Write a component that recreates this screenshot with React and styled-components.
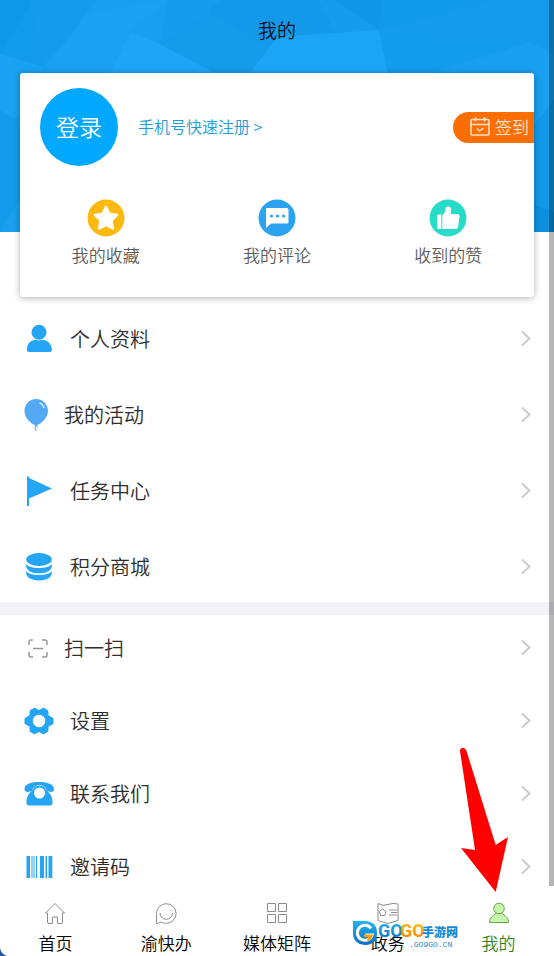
import React from 'react';

import styled, { createGlobalStyle } from 'styled-components';

const FONT_STACK = '"Noto Sans CJK SC", "Noto Sans", sans-serif';
const BLUE = '#24a5f5';
const GREEN = '#2f8420';
const TAB_GREY = '#8c8c8c';

const GlobalStyle = createGlobalStyle`
  * {
    box-sizing: border-box;
  }

  body {
    background: #ffffff;
    font-family: ${FONT_STACK};
    font-weight: 350;
    margin: 0;
  }

  button {
    background: none;
    border: 0;
    cursor: pointer;
    font: inherit;
    padding: 0;
  }

  a {
    color: inherit;
    text-decoration: none;
  }

  svg {
    display: block;
    flex: none;
  }
`;

const Page = styled.div`
  display: flex;
  flex-direction: column;
  height: 100vh;
  overflow: hidden;
  position: relative;
`;

const ScrollFrame = styled.div`
  flex: 1;
  min-height: 0;
  position: relative;
`;

const ScrollArea = styled.main`
  height: 100%;
  overflow-y: auto;
  scrollbar-width: none;
`;

const ScrollThumb = styled.div`
  background: rgba(0, 0, 0, 0.29);
  bottom: 0;
  position: absolute;
  right: 0;
  top: 0;
  width: 5px;
`;

const Hero = styled.header`
  position: relative;
`;

const HeroBackdrop = styled.svg`
  height: 232px;
  left: 0;
  position: absolute;
  top: 0;
  width: 100%;
`;

const Title = styled.h1`
  color: #0a0f1c;
  font-size: 19px;
  font-weight: 350;
  line-height: 60px;
  margin: 0;
  padding-bottom: 13px;
  position: relative;
  text-align: center;
`;

const Card = styled.section`
  background: #ffffff;
  border-radius: 3px;
  box-shadow: 0 1px 7px rgba(0, 0, 0, 0.3);
  margin: 0 20px;
  padding: 15px 0 29px;
  position: relative;
`;

const Account = styled.div`
  align-items: center;
  display: flex;
  gap: 20px;
  padding-left: 20px;
`;

const LoginButton = styled.button`
  background: #00a8ff;
  border-radius: 50%;
  color: #ffffff;
  font-size: 23px;
  height: 78px;
  padding-bottom: 3px;
  width: 78px;
`;

const RegisterLink = styled.a`
  color: #1c9cd4;
  font-size: 16px;
  padding-bottom: 2px;
`;

const CheckInButton = styled.button`
  align-items: center;
  background: #fb6e04;
  border-radius: 16px 0 0 16px;
  color: #ffe3cf;
  display: flex;
  font-size: 17px;
  gap: 5px;
  height: 31px;
  margin-left: auto;
  padding: 0 5px 2px 17px;
`;

const Stats = styled.nav`
  display: grid;
  grid-template-columns: repeat(3, 1fr);
  padding-top: 33px;
`;

const StatLink = styled.a`
  align-items: center;
  color: #5c5c5c;
  display: flex;
  flex-direction: column;
  font-size: 17px;
  gap: 5px;
  line-height: 26px;
`;

const Menu = styled.ul`
  display: flex;
  flex-direction: column;
  gap: ${({ $gap }) => $gap}px;
  list-style: none;
  margin: 0;
  padding: ${({ $top }) => $top}px 0 5px;
`;

const MenuLink = styled.a`
  align-items: center;
  color: #2d2d2d;
  display: flex;
  font-size: 20px;
  gap: 16px;
  height: 60px;
  padding: 0 22px 0 24px;
`;

const MenuLabel = styled.span`
  flex: 1;
  padding-bottom: 2px;
`;

const Divider = styled.hr`
  background: #f2f2f8;
  border: 0;
  height: 13px;
  margin: 0;
`;

const TabBar = styled.nav`
  background: #ffffff;
  display: grid;
  grid-template-columns: repeat(5, 1fr);
  height: 70px;
  padding-top: 16px;
`;

const TabLink = styled.a`
  align-items: center;
  color: ${({ $active }) => ($active ? GREEN : '#000000')};
  display: flex;
  flex-direction: column;
  font-size: 17px;
  gap: 7px;
  line-height: 24px;
`;

const Arrow = styled.svg`
  bottom: 63px;
  pointer-events: none;
  position: absolute;
  right: 44px;
`;

const Watermark = styled.svg`
  bottom: 6px;
  pointer-events: none;
  position: absolute;
  right: 92px;
`;

const Corner = styled.svg`
  bottom: 0;
  left: 0;
  position: absolute;
`;

const Backdrop = () => (
  <HeroBackdrop viewBox="0 0 554 232" preserveAspectRatio="none" aria-hidden="true">
    <rect width="554" height="232" fill="#189ff0" />
    <path d="M0 0H34L0 54Z" fill="#0f97e8" />
    <path d="M34 0H96L44 67L0 54Z" fill="#129aeb" />
    <path d="M30 0L44 67L86 14L96 0Z" fill="#149bec" />
    <path d="M0 54L44 67L20 115L0 130Z" fill="#1aa1f2" />
    <path d="M86 14L168 0L130 32L110 72H44Z" fill="#1aa1f2" />
    <path d="M130 32L160 44L215 73H110Z" fill="#1ea5f5" />
    <path d="M168 0H220L208 13L160 44Z" fill="#159ced" />
    <path d="M208 13L160 44L215 73H250L277 50Z" fill="#149bea" />
    <path d="M220 0H330L379 30L318 36L277 50L208 13Z" fill="#1299ea" />
    <path d="M318 0L340 0L379 30L336 34Z" fill="#169ced" />
    <path d="M277 37L379 30L388 73H250Z" fill="#1da5f5" />
    <path d="M335 0H383L379 30Z" fill="#0f96e7" />
    <path d="M383 0H495L379 30Z" fill="#129aea" />
    <path d="M495 0H554V56L530 42L379 30Z" fill="#149bec" />
    <path d="M379 30L530 42L430 73H388Z" fill="#139bec" />
    <path d="M530 42L554 56V120L534 76H430Z" fill="#199ff0" />
    <path d="M0 110L20 122V232H0Z" fill="#149bec" />
    <path d="M0 232L20 200V232Z" fill="#1aa0ef" />
    <path d="M534 125L554 100V232H534Z" fill="#1198e8" />
    <path d="M534 205L554 212V232H534Z" fill="#0c90e0" />
  </HeroBackdrop>
);

const CalendarIcon = () => (
  <svg width="20" height="20" viewBox="0 0 20 20" fill="none" stroke="#ffe3cf" strokeWidth="1.5">
    <rect x="1" y="3.5" width="18" height="15.5" rx="1" />
    <path d="M1 8.5H19M5.5 1V5.5M14.5 1V5.500M7 12.5L9.5 15L13.5 12" />
  </svg>
);

const StarIcon = () => (
  <svg width="38" height="38" viewBox="0 0 38 38">
    <circle cx="19" cy="19" r="18.5" fill="#fdb90e" />
    <path
      d="M19 8L22.3 14.8L30 16L24.5 21.4L25.8 29.4L19 25.8L12.2 29.4L13.5 21.4L8 16L15.7 14.8Z"
      fill="#ffffff"
      stroke="#ffffff"
      strokeLinejoin="round"
      strokeWidth="2.5"
    />
  </svg>
);

const CommentIcon = () => (
  <svg width="38" height="38" viewBox="0 0 38 38">
    <circle cx="19" cy="19" r="18.5" fill="#2ba3ef" />
    <path d="M9 9H29Q30.5 9 30.5 10.5V23Q30.5 24.5 29 24.5H13L8 29V10Q8 9 9 9Z" fill="#ffffff" />
    <g fill="#2ba3ef">
      <circle cx="13.5" cy="17" r="1.6" />
      <circle cx="19.5" cy="17" r="1.6" />
      <circle cx="25.5" cy="17" r="1.6" />
    </g>
  </svg>
);

const LikeIcon = () => (
  <svg width="38" height="38" viewBox="0 0 38 38">
    <circle cx="19" cy="19" r="18.5" fill="#26dcc6" />
    <g fill="#ffffff">
      <path d="M8 17.5Q8 15.5 10 15.5H12.3V30H10Q8 30 8 28Z" />
      <path d="M13.3 16Q16.5 14 16.5 10Q16.5 7.5 19 7.5Q22.5 7.5 22.3 11.5L21.5 15H28.5Q30.8 15 30.6 17.5L29 28Q28.7 30 27 30H13.3Z" />
    </g>
  </svg>
);

const PersonIcon = () => (
  <svg width="30" height="30" viewBox="0 0 30 30" fill={BLUE}>
    <circle cx="15" cy="8.3" r="7.5" />
    <path d="M2.8 26C3 19.5 7 15.8 12 15.8Q15 17 18 15.8C23 15.8 27.5 19.5 28 26Q28 28 26 28H5Q2.8 28 2.8 26Z" />
  </svg>
);

const BalloonIcon = () => (
  <svg width="24" height="34" viewBox="0 0 24 34">
    <path d="M12.3 1C19 1 24 6.5 24 13C24 19.5 17.5 26 13 27L14 28.5H10L11.3 27C6.5 26 .5 19.5 .5 13C.5 6.5 5.5 1 12.3 1Z" fill="#54a9f6" />
    <path d="M12 28Q9.5 30.5 12.5 33" fill="none" stroke="#54a9f6" />
    <path d="M15.5 5Q19 6 20 10" fill="none" stroke="#d6ecff" strokeWidth="1.5" />
  </svg>
);

const FlagIcon = () => (
  <svg width="30" height="32" viewBox="0 0 30 32" fill={BLUE}>
    <path d="M3 1.5H5V31H3Z" />
    <path d="M5 3L28 13.5L5 23.5Z" />
  </svg>
);

const CoinsIcon = () => (
  <svg width="30" height="30" viewBox="0 0 30 30" fill={BLUE}>
    <ellipse cx="15" cy="7.5" rx="12.8" ry="6.5" />
    <path d="M2.2 12C5 17.3 25 17.3 27.8 12C29 18 23 21.3 15 21.3S1 18 2.2 12Z" />
    <path d="M2.2 19C5 24.3 25 24.3 27.8 19C29 25 23 28.5 15 28.5S1 25 2.2 19Z" />
  </svg>
);

const ScanIcon = () => (
  <svg width="24" height="24" viewBox="0 0 24 24" fill="none" stroke="#999999" strokeWidth="1.5">
    <path d="M5 9V6Q5 4 7 4H9M18 4H21Q23 4 23 6V9M23 16V19Q23 21 21 21H18M9 21H7Q5 21 5 19V16M9 12.5H19.5" />
  </svg>
);

const GearIcon = () => (
  <svg width="30" height="30" viewBox="0 0 30 30">
    <path
      d="M28 13V17L23.2 19.8L22.8 24.8L19.5 26.8L15 24.3L10.5 26.8L7.2 24.8L6.8 19.8L2 17V13L6.8 10.2L7.2 5.2L10.5 3.2L15 5.7L19.5 3.2L22.8 5.2L23.2 10.2Z"
      fill={BLUE}
      stroke={BLUE}
      strokeLinejoin="round"
      strokeWidth="3"
    />
    <circle cx="15" cy="15" r="6.2" fill="#ffffff" />
  </svg>
);

const PhoneIcon = () => (
  <svg width="30" height="30" viewBox="0 0 30 30">
    <path d="M.5 10C1 4.5 8 3 15 3S29.5 4.5 30 10Q30 13 27 13L23 12C22 8 19 6.3 15.5 6.3S9 8 8 12L4 13Q.5 13 .5 10Z" fill={BLUE} />
    <path d="M11 7.5Q15.5 5.8 20 7.5C22 12 28 14 28.500 22V24Q28.5 26.5 26 26.5H5Q2.5 26.5 2.5 24V22C3 14 9 12 11 7.5Z" fill={BLUE} />
    <circle cx="15.5" cy="14" r="5.5" fill="#ffffff" />
  </svg>
);

const BarcodeIcon = () => (
  <svg width="30" height="24" viewBox="0 0 30 24" fill={BLUE}>
    <path d="M2.5 1H6V23H2.5ZM7.5 1H8.5V23H7.5ZM9.5 1H10.5V23H9.5ZM12 1H13V23H12ZM16 1H20V23H16ZM21.5 1H23V23H21.5ZM24.5 1H28.3V23H24.5Z" />
  </svg>
);

const Chevron = () => (
  <svg width="12" height="18" viewBox="0 0 12 18" fill="none" stroke="#cccccc" strokeWidth="2">
    <path d="M2 1.5L9.5 8.5L2 15.5" />
  </svg>
);

const HomeTabIcon = () => (
  <svg width="22" height="22" viewBox="0 0 22 22" fill="none" stroke={TAB_GREY}>
    <path d="M1.5 11L11 1.5L20.5 11H18.5V20Q18.5 21.5 17 21.5H13.5V15H8.5V21.5H5Q3.5 21.5 3.5 20V11Z" strokeLinejoin="round" />
  </svg>
);

const ChatTabIcon = () => (
  <svg width="22" height="22" viewBox="0 0 22 22" fill="none" stroke={TAB_GREY}>
    <path d="M1.5 21.5V11.5A9.8 9.8 0 1 1 11.5 21.3Q8 21.3 5.5 20Q4 21.5 1.5 21.5Z" />
    <path d="M5 11A6.2 6.2 0 0 0 17.5 11" />
  </svg>
);

const GridTabIcon = () => (
  <svg width="22" height="22" viewBox="0 0 22 22" fill="none" stroke={TAB_GREY}>
    <path d="M1.5 1.5H9.5V9.5H1.5ZM12.5 1.5H20.5V9.5H12.5ZM1.5 12.5H9.5V20.5H1.5ZM12.5 12.5H20.5V20.5H12.5Z" />
  </svg>
);

const NewsTabIcon = () => (
  <svg width="22" height="22" viewBox="0 0 22 22" fill="none" stroke={TAB_GREY}>
    <path d="M1 1.5Q6 4.5 11 2.5Q16 .5 21 2V18.5L11 21.5L1 18.5Z" />
    <path d="M5.5 7L9 9.5L7.7 13.5H3.5L2.5 9.5ZM12 8H20M14 10.5H20M12 13H20" />
  </svg>
);

const MineTabIcon = () => (
  <svg width="22" height="22" viewBox="0 0 22 22" fill="#c8f5ae" stroke="#66a84c">
    <path d="M8 10.5C8 13 1.5 13.5 1.5 20.5H20.5C20.5 13.5 14 13 14 10.5Z" />
    <circle cx="11" cy="6.5" r="5.3" />
  </svg>
);

const STATS = [
  { label: '我的收藏', Icon: StarIcon },
  { label: '我的评论', Icon: CommentIcon },
  { label: '收到的赞', Icon: LikeIcon },
];

const PROFILE_ITEMS = [
  { label: '个人资料', Icon: PersonIcon },
  { label: '我的活动', Icon: BalloonIcon },
  { label: '任务中心', Icon: FlagIcon },
  { label: '积分商城', Icon: CoinsIcon },
];

const TOOL_ITEMS = [
  { label: '扫一扫', Icon: ScanIcon },
  { label: '设置', Icon: GearIcon },
  { label: '联系我们', Icon: PhoneIcon },
  { label: '邀请码', Icon: BarcodeIcon },
];

const TABS = [
  { label: '首页', Icon: HomeTabIcon },
  { label: '渝快办', Icon: ChatTabIcon },
  { label: '媒体矩阵', Icon: GridTabIcon },
  { label: '政务', Icon: NewsTabIcon },
  { label: '我的', Icon: MineTabIcon, active: true },
];

const MenuList = ({ items, gap, top }) => (
  <Menu $gap={gap} $top={top}>
    {items.map(({ label, Icon }) => (
      <li key={label}>
        <MenuLink href="#">
          <Icon />
          <MenuLabel>{label}</MenuLabel>
          <Chevron />
        </MenuLink>
      </li>
    ))}
  </Menu>
);

const SiteMark = () => (
  <Watermark width="110" height="30" viewBox="0 0 110 30">
    <defs>
      <linearGradient id="markBlue" x1="0" y1="0" x2="0" y2="1">
        <stop offset="0" stopColor="#22b5ee" />
        <stop offset="1" stopColor="#0c6fc4" />
      </linearGradient>
      <linearGradient id="markOrange" x1="0" y1="0" x2="0" y2="1">
        <stop offset="0" stopColor="#ffc400" />
        <stop offset="1" stopColor="#f87a00" />
      </linearGradient>
    </defs>
    <path d="M1 1H14Q25 2 25 13Q25 25 13 25Q1 24 1 13Z" fill="url(#markBlue)" />
    <path d="M19 8.5A7.5 7.5 0 1 0 20 15H13.5" fill="none" stroke="#ffffff" strokeWidth="3" />
    <path d="M12 14.5H21Q20 20 15 21.5L16 17H12Z" fill="#ff9d0a" />
    <g fontFamily="'Liberation Sans Narrow', Roboto, sans-serif" fontSize="18" fontWeight="700">
      <text x="26" y="17" fill="url(#markBlue)">GO</text>
      <text x="48" y="17" fill="url(#markOrange)">GO</text>
    </g>
    <text x="70" y="17" fontFamily={FONT_STACK} fontSize="12" fontWeight="900" fill="#168bd8">手游网</text>
    <text x="57" y="27" fontFamily="'Liberation Mono', monospace" fontSize="8" fontWeight="400" fill="#2a87bd">.GO9GO.CN</text>
  </Watermark>
);

const App = () => (
  <Page>
    <GlobalStyle />
    <ScrollFrame>
      <ScrollArea>
        <Hero>
          <Backdrop />
          <Title>我的</Title>
          <Card>
            <Account>
              <LoginButton type="button">登录</LoginButton>
              <RegisterLink href="#">手机号快速注册 &gt;</RegisterLink>
              <CheckInButton type="button">
                <CalendarIcon />
                签到
              </CheckInButton>
            </Account>
            <Stats>
              {STATS.map(({ label, Icon }) => (
                <StatLink key={label} href="#">
                  <Icon />
                  {label}
                </StatLink>
              ))}
            </Stats>
          </Card>
        </Hero>
        <MenuList items={PROFILE_ITEMS} gap={16} top={12} />
        <Divider />
        <MenuList items={TOOL_ITEMS} gap={13} top={3} />
      </ScrollArea>
      <ScrollThumb />
    </ScrollFrame>
    <TabBar>
      {TABS.map(({ label, Icon, active }) => (
        <TabLink key={label} href="#" $active={active}>
          <Icon />
          {label}
        </TabLink>
      ))}
    </TabBar>
    <Corner width="7" height="8" viewBox="0 0 7 8" aria-hidden="true">
      <path d="M0 0Q1 6 7 8H0Z" fill="#1f5a9c" />
    </Corner>
    <SiteMark />
    <Arrow width="50" height="146" viewBox="460 747 50 146" aria-hidden="true">
      <path d="M460 751Q460 748 463 748Q465.5 748 466.5 751L495.7 845L508 837L495.7 892L461 848L475 850Z" fill="#ff0000" />
    </Arrow>
  </Page>
);

export default App;
